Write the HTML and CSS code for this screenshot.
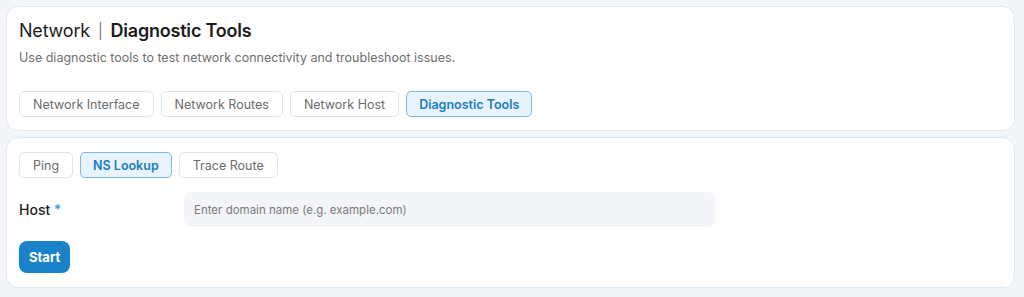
FILE: index.html
```html
<!DOCTYPE html>
<html lang="en">
<head>
    <meta charset="UTF-8">
    <meta name="viewport" content="width=device-width, initial-scale=1.0">
    <title>Network | Diagnostic Tools</title>
    <link rel="stylesheet" href="styles.css">
</head>
<body>
    <div class="panel header-panel">
        <h1 class="page-title">
            <span class="crumb">Network</span>
            <span class="divider">|</span>
            <span class="current">Diagnostic Tools</span>
        </h1>
        <p class="page-desc">Use diagnostic tools to test network connectivity and troubleshoot issues.</p>
        <div class="tabs nav-tabs">
            <button class="tab">Network Interface</button>
            <button class="tab">Network Routes</button>
            <button class="tab">Network Host</button>
            <button class="tab active">Diagnostic Tools</button>
        </div>
    </div>

    <div class="panel tool-panel">
        <div class="tabs">
            <button class="tab">Ping</button>
            <button class="tab active">NS Lookup</button>
            <button class="tab">Trace Route</button>
        </div>
        <div class="form-row">
            <label class="form-label" for="hostInput">Host <span class="required">*</span></label>
            <input type="text" id="hostInput" class="form-input" placeholder="Enter domain name (e.g. example.com)" autocomplete="off">
        </div>
        <button class="start-btn">Start</button>
    </div>
</body>
</html>
```

FILE: styles.css
```css
body {
    font-family: Inter, "Noto Sans", sans-serif;
    margin: 0;
    padding: 6px 9px 6px 6px;
    background-color: #f3f5f9;
    color: #1c1c1c;
}

.panel {
    background: white;
    border: 1px solid #dde9f3;
    border-radius: 12px;
}

.header-panel {
    padding: 12px 12px 13px;
    margin-bottom: 6px;
}

.page-title {
    margin: 0;
    font-size: 18px;
    font-weight: 500;
    line-height: 24px;
    display: flex;
    align-items: center;
    gap: 8px;
    letter-spacing: -0.2px;
}

.page-title .crumb {
    font-weight: 400;
}

.page-title .divider {
    font-weight: 300;
    font-size: 15px;
    color: #555;
}

.page-title .current {
    font-weight: 600;
}

.page-desc {
    margin: 6px 0 0;
    font-size: 12.5px;
    color: #6f6f6f;
    line-height: 18px;
}

.tabs {
    display: flex;
    gap: 7px;
}

.nav-tabs {
    margin-top: 24px;
}

.tab {
    font-family: inherit;
    font-size: 12.5px;
    color: #6b6b6b;
    background: white;
    border: 1px solid #e2e4e8;
    border-radius: 5px;
    height: 26px;
    padding: 0 13px;
    cursor: pointer;
}

.tab.active {
    background: #e7f4fd;
    border-color: #7cb9e2;
    color: #1a7cc0;
    font-weight: 600;
    padding: 0 12px;
}

.tool-panel {
    padding: 14px 12px 14px;
}

.form-row {
    display: flex;
    align-items: center;
    margin-top: 14px;
}

.form-label {
    width: 165px;
    font-size: 14px;
    font-weight: 500;
    color: #1c1c1c;
}

.required {
    color: #4a95d1;
}

.form-input {
    width: 531px;
    height: 35px;
    box-sizing: border-box;
    border: none;
    border-radius: 8px;
    background: #f3f5f9;
    padding: 0 10px;
    font-family: inherit;
    font-size: 11.5px;
    color: #333;
    outline: none;
}

.form-input::placeholder {
    color: #7a7a7a;
}

.start-btn {
    display: block;
    margin-top: 14px;
    background: #1a82c8;
    color: white;
    border: none;
    border-radius: 8px;
    height: 32px;
    padding: 0 10px;
    font-family: inherit;
    font-size: 13px;
    font-weight: 700;
    cursor: pointer;
}

.start-btn:hover {
    background: #1570ad;
}
```
